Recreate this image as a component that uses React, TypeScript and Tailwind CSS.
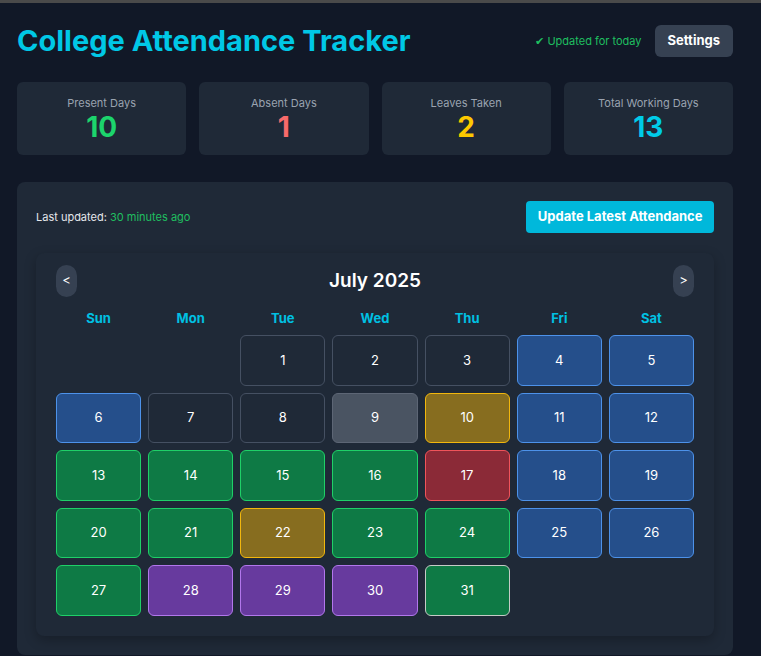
import React from "react";

type Status = "none" | "present" | "absent" | "leave" | "weekend" | "holiday" | "gray" | "today";

const statusClass: Record<Status, string> = {
  none: "bg-[#1f2937] border-[#455062]",
  gray: "bg-[#4a5462] border-[#5d6675]",
  present: "bg-[#0e7a45] border-[#1fd068]",
  absent: "bg-[#8b2a37] border-[#f0545a]",
  leave: "bg-[#876d1f] border-[#f2b70d]",
  weekend: "bg-[#254f8b] border-[#4d92ea]",
  holiday: "bg-[#673a9e] border-[#b277ec]",
  today: "bg-[#0e7a45] border-[#c5cbc6]",
};

const days: Record<number, Status> = {
  1: "none", 2: "none", 3: "none", 4: "weekend", 5: "weekend",
  6: "weekend", 7: "none", 8: "none", 9: "gray", 10: "leave", 11: "weekend", 12: "weekend",
  13: "present", 14: "present", 15: "present", 16: "present", 17: "absent", 18: "weekend", 19: "weekend",
  20: "present", 21: "present", 22: "leave", 23: "present", 24: "present", 25: "weekend", 26: "weekend",
  27: "present", 28: "holiday", 29: "holiday", 30: "holiday", 31: "today",
};

const stats = [
  { label: "Present Days", value: "10", color: "text-[#1cd46c]" },
  { label: "Absent Days", value: "1", color: "text-[#f86a6a]" },
  { label: "Leaves Taken", value: "2", color: "text-[#fcc800]" },
  { label: "Total Working Days", value: "13", color: "text-[#00cbe8]" },
];

const headers = ["Sun", "Mon", "Tue", "Wed", "Thu", "Fri", "Sat"];

export default function App() {
  const cells: (number | null)[] = [null, null];
  for (let d = 1; d <= 31; d++) cells.push(d);

  return (
    <div className="min-h-[656px] bg-[#111827] font-['Inter',sans-serif] text-white">
      <div className="h-[3px] bg-[#4a4a4a]" />
      <div className="w-[716px] ml-[17px]">
        <div className="flex items-center justify-between pt-[20px] h-[56px]">
          <h1 className="text-[29px] leading-9 font-bold text-[#00c8e6]">College Attendance Tracker</h1>
          <div className="flex items-center gap-[13px]">
            <span className="text-[11px] text-[#1fbf60]">✔ Updated for today</span>
            <button className="h-8 px-[13px] rounded-md bg-[#364152] text-[13px] font-bold text-white">Settings</button>
          </div>
        </div>

        <div className="grid grid-cols-4 gap-[13px] mt-[23px]">
          {stats.map((s) => (
            <div key={s.label} className="h-[73px] rounded-md bg-[#1f2937] flex flex-col items-center pt-[13px]">
              <div className="text-[11px] leading-4 text-[#9aa3b0]">{s.label}</div>
              <div className={`text-[28px] leading-8 font-bold ${s.color}`}>{s.value}</div>
            </div>
          ))}
        </div>

        <div className="mt-[27px] rounded-lg bg-[#1f2937] px-[19px] pt-[19px] pb-[19px]">
          <div className="flex items-center justify-between h-8">
            <div className="text-[11px] text-[#e5e7eb]">
              Last updated: <span className="text-[#1fbf60]">30 minutes ago</span>
            </div>
            <button className="h-8 px-[11.5px] rounded-sm bg-[#00b8db] text-[13px] font-bold text-white">
              Update Latest Attendance
            </button>
          </div>

          <div className="mt-[20px] rounded-lg bg-[#1f2937] shadow-[0_4px_12px_rgba(0,0,0,0.25)] px-[20px] pt-[12px] pb-[20px]">
            <div className="flex items-center justify-between h-8">
              <button className="w-[21px] h-8 rounded-full bg-[#364152] text-[13px] text-white">&lt;</button>
              <div className="text-[19px] leading-7 font-semibold text-white">July 2025</div>
              <button className="w-[21px] h-8 rounded-full bg-[#364152] text-[13px] text-white">&gt;</button>
            </div>
            <div className="grid grid-cols-7 gap-x-[7px] gap-y-[7px] mt-[11px]">
              {headers.map((h) => (
                <div key={h} className="h-5 text-center text-[13px] leading-5 font-bold text-[#00c0e2]">{h}</div>
              ))}
              {cells.map((d, i) =>
                d === null ? (
                  <div key={`e${i}`} className="h-[50.5px]" />
                ) : (
                  <div
                    key={d}
                    className={`h-[50.5px] rounded-md border flex items-center justify-center text-[13px] text-white ${statusClass[days[d]]}`}
                  >
                    {d}
                  </div>
                )
              )}
            </div>
          </div>
        </div>
      </div>
    </div>
  );
}
